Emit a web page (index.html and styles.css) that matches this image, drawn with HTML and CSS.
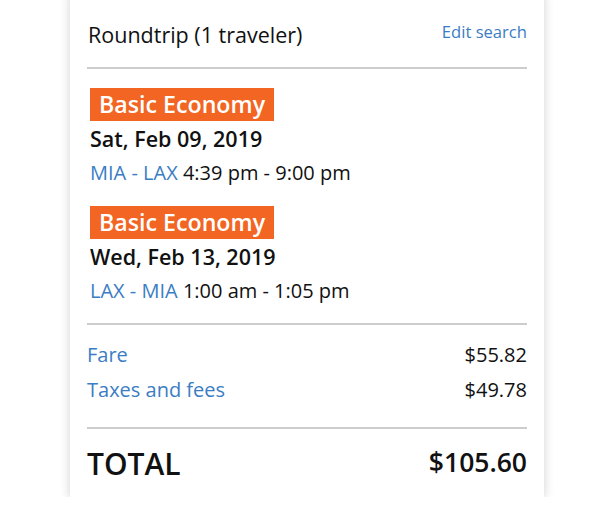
FILE: index.html
```html
<!DOCTYPE html>
<html>
<head>
  <title>Trip Summary</title>
  <link rel="stylesheet" href="styles.css">
</head>
<body>
  <div class="summary-card">
    <div class="summary-header">
      <span class="trip-type">Roundtrip (1 traveler)</span>
      <a class="edit-link" href="#">Edit search</a>
    </div>

    <div class="flights">
      <div class="flight">
        <span class="fare-badge">Basic Economy</span>
        <div class="flight-date">Sat, Feb 09, 2019</div>
        <div class="flight-route"><span class="airports">MIA - LAX</span> 4:39 pm - 9:00 pm</div>
      </div>
      <div class="flight">
        <span class="fare-badge">Basic Economy</span>
        <div class="flight-date">Wed, Feb 13, 2019</div>
        <div class="flight-route"><span class="airports">LAX - MIA</span> 1:00 am - 1:05 pm</div>
      </div>
    </div>

    <div class="price-lines">
      <div class="price-row">
        <span class="price-label">Fare</span>
        <span class="price-value">$55.82</span>
      </div>
      <div class="price-row">
        <span class="price-label">Taxes and fees</span>
        <span class="price-value">$49.78</span>
      </div>
    </div>

    <div class="total-row">
      <span class="total-label">TOTAL</span>
      <span class="total-value">$105.60</span>
    </div>
  </div>
</body>
</html>
```

FILE: styles.css
```css
body {
  margin: 0;
  background-color: #fff;
  font-family: 'Open Sans', sans-serif;
  color: #111;
}
.summary-card {
  width: 440px;
  margin: -10px 0 0 70px;
  padding: 10px 17px 0 17px;
  background-color: #fff;
  box-shadow: 0 2px 10px rgba(0,0,0,0.18);
}
.summary-header {
  display: flex;
  justify-content: space-between;
  align-items: flex-start;
  padding: 21px 0 18px 1px;
  border-bottom: 2px solid #ccc;
}
.trip-type {
  font-size: 21.5px;
  line-height: 28px;
}
.edit-link {
  font-size: 16.6px;
  line-height: 22px;
  color: #3b7dc4;
  text-decoration: none;
}
.flights {
  padding: 19px 0 16px 3px;
  border-bottom: 2px solid #ccc;
}
.flight + .flight {
  margin-top: 17px;
}
.fare-badge {
  display: inline-block;
  background-color: #f26522;
  color: #fff;
  font-size: 23.2px;
  font-weight: 600;
  line-height: 33px;
  padding: 0 9px;
}
.flight-date {
  font-size: 21.5px;
  font-weight: 600;
  line-height: 35px;
}
.flight-route {
  font-size: 20px;
  line-height: 33px;
}
.airports {
  color: #3b7dc4;
}
.price-lines {
  padding: 12px 0 20px 0;
  border-bottom: 2px solid #ccc;
}
.price-row {
  display: flex;
  justify-content: space-between;
  font-size: 20px;
  line-height: 35px;
}
.price-label {
  color: #3b7dc4;
}
.total-row {
  display: flex;
  justify-content: space-between;
  align-items: flex-start;
  padding: 15px 0 13px 0;
}
.total-label {
  font-size: 30px;
  font-weight: 600;
  line-height: 40px;
}
.total-value {
  font-size: 26.5px;
  font-weight: 600;
  line-height: 36px;
}
```
